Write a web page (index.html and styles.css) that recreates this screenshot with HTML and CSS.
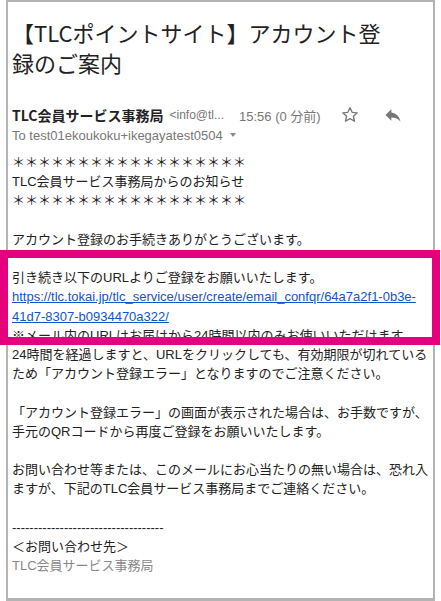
FILE: index.html
```html
<!DOCTYPE html>
<html lang="ja">
<head>
    <meta charset="UTF-8">
    <meta name="viewport" content="width=device-width, initial-scale=1.0">
    <title>【TLCポイントサイト】アカウント登録のご案内</title>
    <link rel="stylesheet" href="styles.css">
</head>
<body>
    <div class="mail">
        <h1 class="subject">【TLCポイントサイト】アカウント登録のご案内</h1>
        <div class="meta">
            <div class="from-row">
                <span class="sender">TLC会員サービス事務局</span>
                <span class="address">&lt;info@tl...</span>
                <span class="time">15:56 (0 分前)</span>
                <svg class="icon star" viewBox="0 0 24 24" width="20" height="20"><path d="M12 3.2l2.6 5.6 6.1.6-4.6 4.1 1.3 6-5.4-3.1-5.4 3.1 1.3-6-4.6-4.1 6.1-.6z" fill="none" stroke="#777" stroke-width="1.6" stroke-linejoin="round"/></svg>
                <svg class="icon reply" viewBox="0 0 24 24" width="20" height="20"><path d="M10 9V5l-7 7 7 7v-4.1c5 0 8.5 1.6 11 5.1-1-5-4-10-11-11z" fill="#777"/></svg>
            </div>
            <div class="to-row">To test01ekoukoku+ikegayatest0504 <span class="caret"></span></div>
        </div>
        <div class="body">
            <p>＊＊＊＊＊＊＊＊＊＊＊＊＊＊＊＊＊＊<br>TLC会員サービス事務局からのお知らせ<br>＊＊＊＊＊＊＊＊＊＊＊＊＊＊＊＊＊＊</p>
            <p>アカウント登録のお手続きありがとうございます。</p>
            <p>引き続き以下のURLよりご登録をお願いいたします。<br><a href="#">https://tlc.tokai.jp/tlc_service/user/create/email_confqr/64a7a2f1-0b3e-<br>41d7-8307-b0934470a322/</a><br>※メール内のURLはお届けから24時間以内のみお使いいただけます。<br>24時間を経過しますと、URLをクリックしても、有効期限が切れている<br>ため「アカウント登録エラー」となりますのでご注意ください。</p>
            <p>「アカウント登録エラー」の画面が表示された場合は、お手数ですが、<br>手元のQRコードから再度ご登録をお願いいたします。</p>
            <p>お問い合わせ等または、このメールにお心当たりの無い場合は、恐れ入<br>ますが、下記のTLC会員サービス事務局までご連絡ください。</p>
            <p class="signature">-----------------------------------<br>＜お問い合わせ先＞<br><span class="muted">TLC会員サービス事務局</span></p>
        </div>
    </div>
    <div class="highlight"></div>
</body>
</html>
```

FILE: styles.css
```css
body { margin: 0; background: #fff; font-family: "Noto Sans CJK JP", "Liberation Sans", sans-serif; color: #222; }
.mail { margin: 0 6px; height: 601px; box-sizing: border-box; border: 2px solid #b4b4b4; border-bottom-width: 3px; padding: 15px 4px 0 4px; }
.subject { margin: 0; width: 380px; font-size: 22px; line-height: 30px; font-weight: normal; color: #222; }
.meta { margin-top: 28px; font-family: "Liberation Sans", "Noto Sans CJK JP", sans-serif; }
.from-row { display: flex; align-items: center; height: 20px; }
.sender { font-family: "Noto Sans CJK JP", sans-serif; font-weight: bold; font-size: 14px; color: #222; }
.address { margin-left: 6px; font-size: 12px; color: #777; }
.time { margin-left: 15px; font-size: 13px; color: #777; }
.icon { display: block; }
.star { margin-left: 19px; }
.reply { margin-left: 23px; }
.to-row { display: flex; align-items: center; height: 20px; font-size: 13px; color: #777; }
.caret { margin-left: 7px; width: 0; height: 0; border-left: 3px solid transparent; border-right: 3px solid transparent; border-top: 4px solid #888; }
.body { margin-top: 8px; font-family: "Liberation Sans", "Noto Sans CJK JP", sans-serif; font-size: 13px; line-height: 19.2px; }
.body p { margin: 0 0 19.2px; white-space: nowrap; }
.body a { color: #1155cc; }
.signature { margin: 0; }
.muted { color: #888; }
.highlight { position: absolute; left: 0; top: 250px; width: 440px; height: 95px; box-sizing: border-box; border: 8px solid #e5007f; }
```
